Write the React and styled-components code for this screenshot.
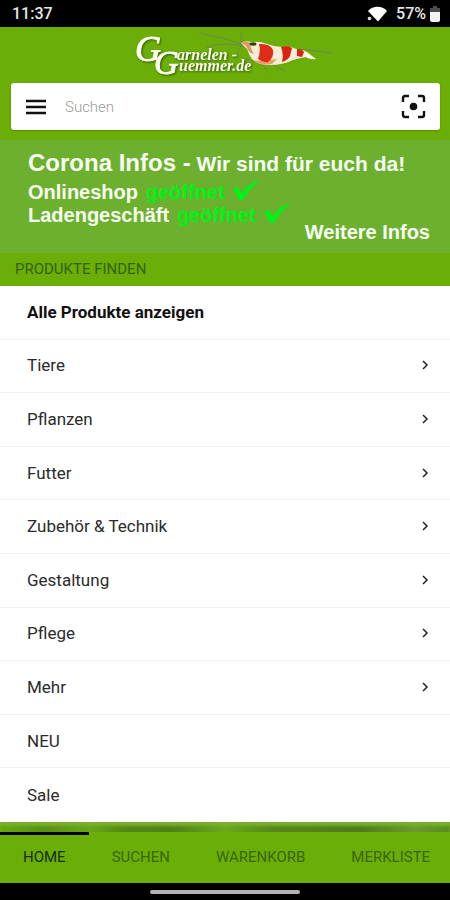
import React from 'react';
import styled, { createGlobalStyle } from 'styled-components';

const colors = {
  green: '#6aae07',
  banner: '#6db030',
  neon: '#00f218',
  ink: '#2b2b2b',
  line: '#f1f1f1',
};

const GlobalStyle = createGlobalStyle`
  *, *::before, *::after {
    box-sizing: border-box;
  }

  body {
    margin: 0;
    background: ${colors.green};
    font-family: Roboto, "Liberation Sans", sans-serif;
  }
`;

const Page = styled.div`
  display: flex;
  flex-direction: column;
  min-height: 100vh;
  overflow-x: hidden;
`;

const StatusBar = styled.div`
  display: flex;
  justify-content: space-between;
  align-items: center;
  height: 27px;
  padding: 0 10px 0 12px;
  background: black;
  color: #e8e8e8;
  font-size: 16px;
  font-weight: 500;
`;

const StatusIcons = styled.div`
  display: flex;
  align-items: center;
`;

const BatteryLevel = styled.span`
  margin: 0 4px 0 8px;
`;

const Header = styled.header`
  display: flex;
  flex-direction: column;
  padding: 0 10px 10px 11px;
`;

const LogoLink = styled.a`
  align-self: center;
  height: 56px;
`;

const SearchBox = styled.form`
  display: flex;
  align-items: center;
  height: 47px;
  padding: 0 14px;
  background: white;
  border-radius: 3px;
  box-shadow: 0 1px 2px rgba(0, 0, 0, 0.2);
`;

const IconButton = styled.button`
  display: flex;
  padding: 0;
  border: 0;
  background: none;
  color: #111;
`;

const SearchInput = styled.input`
  flex: 1;
  min-width: 0;
  padding: 0 18px;
  border: 0;
  outline: 0;
  background: none;
  font-family: inherit;
  font-size: 15px;
  font-weight: 300;

  &::placeholder {
    color: #9a9a9a;
    opacity: 1;
  }
`;

const Banner = styled.section`
  display: flex;
  flex-direction: column;
  height: 113px;
  padding: 9px 20px 0 28px;
  background: ${colors.banner};
  color: #f7fff0;
  font-family: "Liberation Sans", Arial, sans-serif;
  font-size: 20px;
  font-weight: bold;
  line-height: 23px;
`;

const BannerTitle = styled.h1`
  margin: 0 0 3px;
  font-size: 21px;
  line-height: 28px;
  white-space: nowrap;
`;

const Large = styled.span`
  font-size: 24px;
`;

const BannerLine = styled.p`
  display: flex;
  align-items: center;
  gap: 8px;
  height: 23px;
  margin: 0;
`;

const Open = styled.span`
  color: ${colors.neon};
`;

const BannerLink = styled.a`
  align-self: flex-end;
  margin-top: -6px;
  color: inherit;
  text-decoration: none;
`;

const SectionTitle = styled.h2`
  margin: 0;
  padding: 0 15px;
  color: #356206;
  font-size: 15px;
  font-weight: 400;
  line-height: 33px;
`;

const Menu = styled.ul`
  flex: 1;
  display: grid;
  grid-auto-rows: minmax(48px, 1fr);
  margin: 0;
  padding: 0;
  background: white;
  list-style: none;
`;

const MenuItem = styled.li`
  display: flex;
  border-bottom: 1px solid ${colors.line};

  &:last-child {
    border-bottom: 0;
  }
`;

const MenuLink = styled.a`
  flex: 1;
  display: flex;
  justify-content: space-between;
  align-items: center;
  padding: 0 21px 1px 27px;
  color: ${props => (props.$strong ? '#111' : colors.ink)};
  font-size: 17px;
  font-weight: ${props => (props.$strong ? 700 : 400)};
  text-decoration: none;
`;

const Teaser = styled.div`
  height: 10px;
  background: linear-gradient(
    to right,
    #66a80c,
    #5a8f14 10%,
    #6aa516 20%,
    #548614 28%,
    #4f7f17 38%,
    #6ba81e 50%,
    #578719 60%,
    #507a1c 80%,
    #6a9a2c 92%,
    #5a8a20
  );
  box-shadow: inset 0 4px 3px #78b030;
`;

const Tabs = styled.nav`
  display: flex;
  height: 51px;
  overflow: hidden;
`;

const Tab = styled.a`
  flex: none;
  padding: 0 23px;
  border-top: 3px solid ${props => (props.$active ? 'black' : 'transparent')};
  color: ${props => (props.$active ? '#182d02' : '#386706')};
  font-size: 15px;
  line-height: 45px;
  text-decoration: none;
`;

const SystemBar = styled.div`
  display: flex;
  justify-content: center;
  align-items: center;
  height: 17px;
  background: black;
`;

const HomeHandle = styled.div`
  width: 33.3%;
  height: 4px;
  border-radius: 2px;
  background: #b3b3b3;
`;

const menu = [
  { label: 'Alle Produkte anzeigen', strong: true },
  { label: 'Tiere', more: true },
  { label: 'Pflanzen', more: true },
  { label: 'Futter', more: true },
  { label: 'Zubehör & Technik', more: true },
  { label: 'Gestaltung', more: true },
  { label: 'Pflege', more: true },
  { label: 'Mehr', more: true },
  { label: 'NEU' },
  { label: 'Sale' },
];

const tabs = ['HOME', 'SUCHEN', 'WARENKORB', 'MERKLISTE'];

const WifiIcon = () => (
  <svg width="21" height="16" viewBox="0 0 21 16" aria-hidden="true">
    <path d="M1 5C6-.6 15-.6 20 5L11 15.500Z" fill="#fff" />
    <path d="M0 9h5v7H0Z" fill="#000" />
    <circle cx="2.500" cy="12.500" r="1.800" fill="#ddd" />
  </svg>
);

const BatteryIcon = () => (
  <svg width="10" height="16" viewBox="0 0 10 16" aria-hidden="true">
    <path d="M3 0h4v2h3v5H0V2h3Z" fill="#4c4c4c" />
    <path d="M0 6h10v8q0 2-2 2H2q-2 0-2-2Z" fill="#f4f4f4" />
  </svg>
);

const MenuIcon = () => (
  <svg width="22" height="16" viewBox="0 0 22 16" aria-hidden="true">
    <path d="M1 2h20M1 8h20M1 14h20" stroke="currentColor" strokeWidth="2.400" />
  </svg>
);

const ScanIcon = () => (
  <svg width="25" height="25" viewBox="0 0 25 25" aria-hidden="true">
    <path
      d="M2 8V4q0-2 2-2h4M17 2h4q2 0 2 2v4M23 17v4q0 2-2 2h-4M8 23H4q-2 0-2-2v-4"
      fill="none"
      stroke="currentColor"
      strokeWidth="2.400"
    />
    <circle cx="12.500" cy="12.500" r="3.800" fill="currentColor" />
  </svg>
);

const CheckIcon = () => (
  <svg width="26" height="23" viewBox="0 0 26 23" aria-hidden="true">
    <path
      d="M0 8 5 6 9 12Q14 4 23 0L26 0Q16 8 10 19L6 19Z"
      fill={colors.neon}
    />
  </svg>
);

const Chevron = () => (
  <svg width="8" height="10" viewBox="0 0 8 10" aria-hidden="true">
    <path d="M2 1l4 4-4 4" fill="none" stroke="#222" strokeWidth="1.500" />
  </svg>
);

const Logo = () => (
  <svg width="218" height="56" viewBox="116 27 218 56" role="img" aria-label="Garnelen Guemmer.de">
    <g stroke="#6f8752" strokeWidth="1" fill="none">
      <path d="M243 45Q222 37 198 33M243 46Q220 41 205 48M242 46Q238 38 241 32M240 46l-6 12" />
      <path d="M299 49q18 2 32 4" />
      <path d="M258 62l5 4 4 7M268 62l8 5 8 4M248 58l-8 3M250 59l-9 4M252 61l-9 5" />
    </g>
    <g
      fill="#fdfff0"
      fontFamily="'Liberation Serif', serif"
      fontStyle="italic"
      style={{ filter: 'drop-shadow(1px 1px 1px #355c06)' }}
    >
      <g stroke="#fdfff0" strokeWidth="1">
        <text x="134" y="61" fontSize="36">G</text>
        <text x="153" y="74" fontSize="34">G</text>
      </g>
      <g fontSize="16" fontWeight="bold">
        <text x="176" y="60">arnelen -</text>
        <text x="178" y="71">uemmer.de</text>
      </g>
    </g>
    <path
      d="M240 43q5-3 10-1 9-1 16 2 8 3 15 3 9-1 17 3 5 0 8 2l9 7q-5 1-10-2-6 1-13 3-10 5-23 5-12 0-18-6-3-4-5-10Z"
      fill="#f6edd6"
    />
    <path d="M240 43q6-3 9 0 1 7 4 11-5-1-7-6-1-3-6-5Z" fill="#dc9866" />
    <path d="M252 60q10 2 24-1l-5 5q-12 2-19-4Z" fill="#e6a06c" />
    <path d="M258 44q11-1 14 6 1 8-5 12-5 1-10-3 3-8 1-15Z" fill="#e02c16" />
    <path d="M280 47q6-2 11 1l-2 8q-2 4-8 6 2-7-1-15Z" fill="#d92313" />
    <path d="M296 49q5 0 7 3l-2 5-5-1Z" fill="#d92313" />
    <path d="M304 52l11 7-9-1Z" fill="#fffdf2" />
    <ellipse cx="252" cy="44" rx="3.500" ry="1.700" fill="#32400f" />
  </svg>
);

function App() {
  return (
    <>
      <GlobalStyle />
      <Page>
        <StatusBar>
          <span>11:37</span>
          <StatusIcons>
            <WifiIcon />
            <BatteryLevel>57%</BatteryLevel>
            <BatteryIcon />
          </StatusIcons>
        </StatusBar>
        <Header>
          <LogoLink href="#home">
            <Logo />
          </LogoLink>
          <SearchBox role="search">
            <IconButton type="button" aria-label="Menü">
              <MenuIcon />
            </IconButton>
            <SearchInput type="text" aria-label="Suchen" placeholder="Suchen" />
            <IconButton type="button" aria-label="Code scannen">
              <ScanIcon />
            </IconButton>
          </SearchBox>
        </Header>
        <Banner>
          <BannerTitle>
            <Large>Corona Infos -</Large> Wir sind für euch da!
          </BannerTitle>
          <BannerLine>
            Onlineshop <Open>geöffnet</Open> <CheckIcon />
          </BannerLine>
          <BannerLine>
            Ladengeschäft <Open>geöffnet</Open> <CheckIcon />
          </BannerLine>
          <BannerLink href="#infos">Weitere Infos</BannerLink>
        </Banner>
        <SectionTitle>PRODUKTE FINDEN</SectionTitle>
        <Menu>
          {menu.map(item => (
            <MenuItem key={item.label}>
              <MenuLink href="#produkte" $strong={item.strong}>
                {item.label}
                {item.more && <Chevron />}
              </MenuLink>
            </MenuItem>
          ))}
        </Menu>
        <Teaser />
        <Tabs>
          {tabs.map((tab, index) => (
            <Tab key={tab} href={`#${tab.toLowerCase()}`} $active={index === 0}>
              {tab}
            </Tab>
          ))}
        </Tabs>
        <SystemBar>
          <HomeHandle />
        </SystemBar>
      </Page>
    </>
  );
}

export default App;
